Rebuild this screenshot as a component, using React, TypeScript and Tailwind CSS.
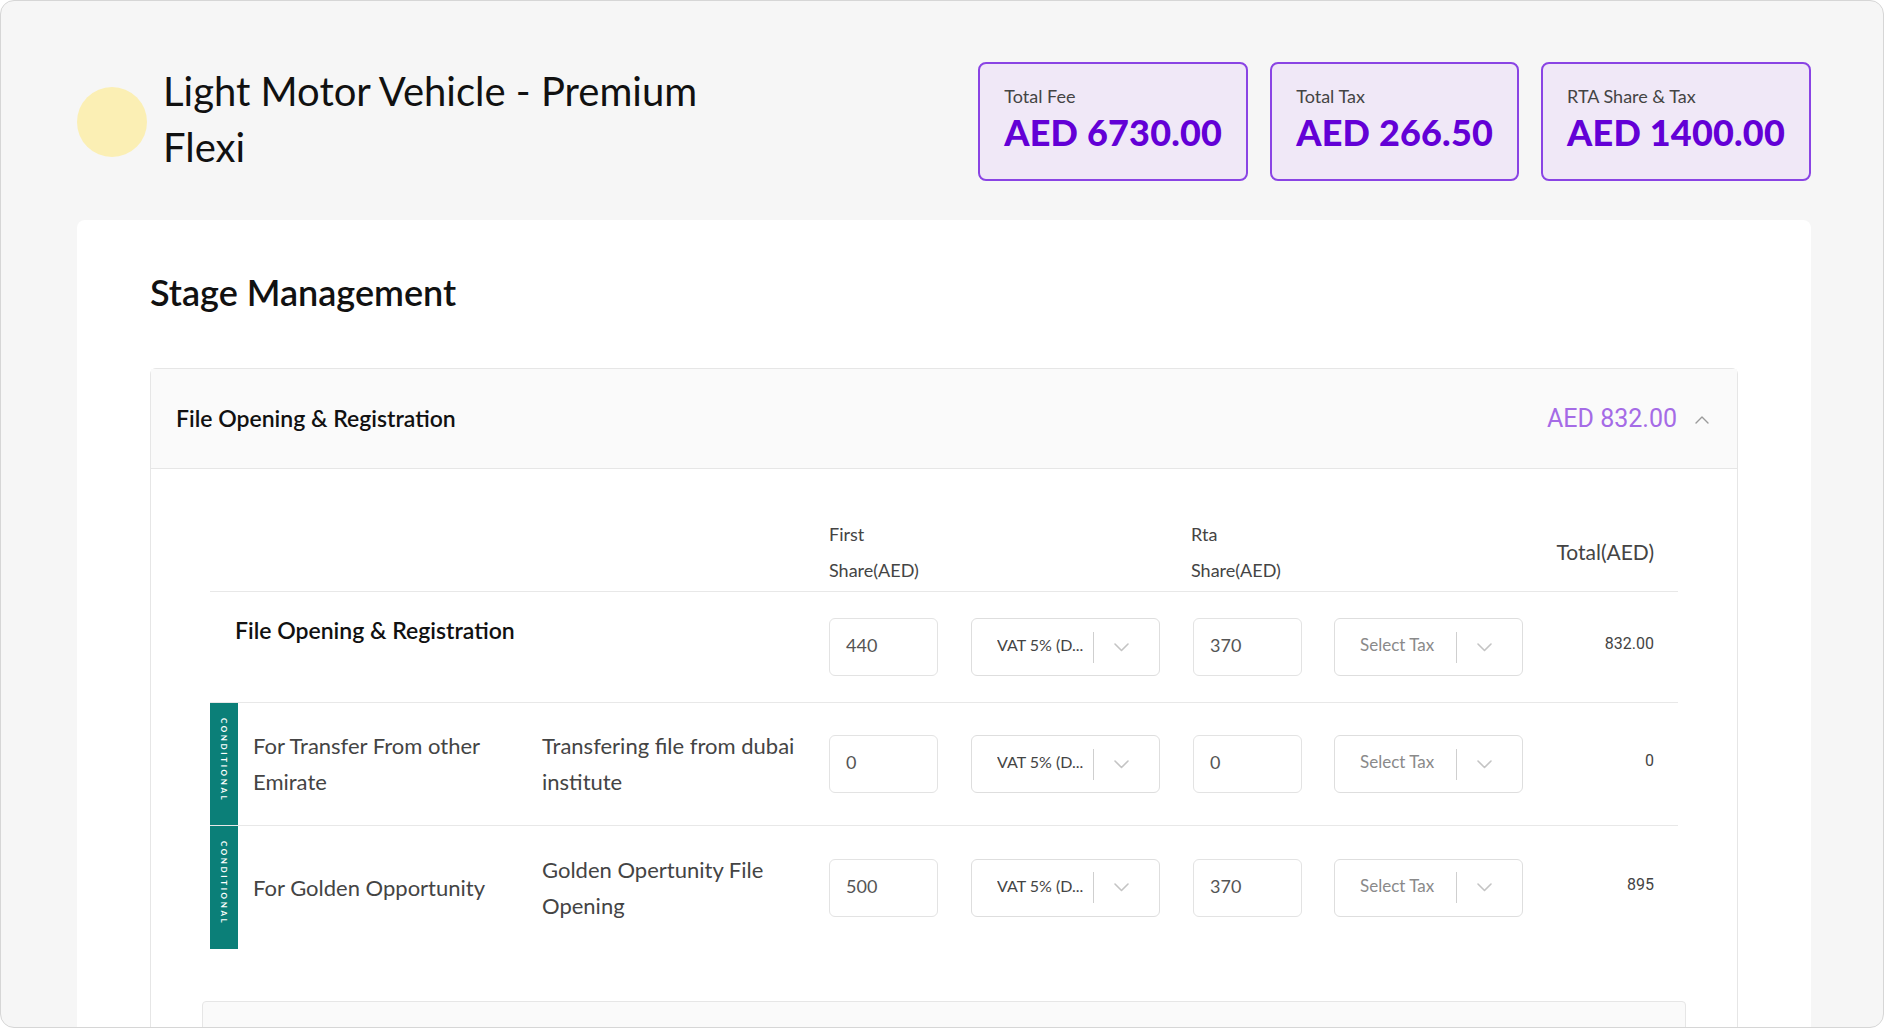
import type React from "react";

const font = { fontFamily: "Lato, 'Noto Sans', sans-serif" };
const roboto = { fontFamily: "Roboto, sans-serif" };

interface SummaryCardProps {
  label: string;
  value: string;
}

const SummaryCard: React.FC<SummaryCardProps> = ({ label, value }) => (
  <div className="flex h-[119px] flex-col justify-center gap-[4px] rounded-[8px] border-2 border-[#8a44e4] bg-[#f0e8f7] px-[24px] pb-[5px]">
    <p className="text-[18px] leading-[22px] text-[#444]">{label}</p>
    <p className="text-[36px] font-black leading-[42px] tracking-[0.2px] text-[#6300d6]">
      {value}
    </p>
  </div>
);

const ChevronDown = () => (
  <svg width="15" height="9" viewBox="0 0 15 9" fill="none">
    <polyline
      points="1,1 7.5,7.5 14,1"
      stroke="#c4c4c4"
      strokeWidth="1.6"
      strokeLinecap="round"
      strokeLinejoin="round"
    />
  </svg>
);

const TextInput = ({ value }: { value: string }) => (
  <div className="flex h-[58px] w-[109px] shrink-0 items-start rounded-[6px] border border-[#e3e3e3] bg-white px-[16px] pt-[13px] text-[18px] leading-[26px] text-[#555]">
    {value}
  </div>
);

const TaxSelect = ({ value, placeholder }: { value?: string; placeholder?: string }) => (
  <div className="flex h-[58px] w-[189px] shrink-0 items-center rounded-[6px] border border-[#dedede] bg-white pl-[25px]">
    <span
      className={`-mt-[4px] w-[96px] overflow-hidden whitespace-nowrap ${
        value ? "text-[16px] text-[#444]" : "text-[17px] text-[#8a8a8a]"
      }`}
    >
      {value ?? placeholder}
    </span>
    <span className="h-[31px] w-px bg-[#cfcfcf]" />
    <span className="ml-[20px] flex">
      <ChevronDown />
    </span>
  </div>
);

const ConditionalBadge = () => (
  <div className="flex w-[28px] shrink-0 items-start justify-center bg-[#0b7f78] pt-[15px]">
    <span
      className="text-[8px] font-bold tracking-[2.6px] text-white"
      style={{ writingMode: "vertical-rl" }}
    >
      CONDITIONAL
    </span>
  </div>
);

interface FeeRow {
  name: string;
  description: string;
  firstShare: string;
  rtaShare: string;
  total: string;
}

const conditionalRows: FeeRow[] = [
  {
    name: "For Transfer From other Emirate",
    description: "Transfering file from dubai institute",
    firstShare: "0",
    rtaShare: "0",
    total: "0",
  },
  {
    name: "For Golden Opportunity",
    description: "Golden Opertunity File Opening",
    firstShare: "500",
    rtaShare: "370",
    total: "895",
  },
];

const InputCells = ({ first, rta }: { first: string; rta: string }) => (
  <div className="flex items-center">
    <TextInput value={first} />
    <div className="ml-[33px]">
      <TaxSelect value="VAT 5% (D..." />
    </div>
    <div className="ml-[33px]">
      <TextInput value={rta} />
    </div>
    <div className="ml-[32px]">
      <TaxSelect placeholder="Select Tax" />
    </div>
  </div>
);

export default function App() {
  return (
    <div
      className="h-[1028px] w-full overflow-hidden rounded-[14px] border border-[#d6d6d6] bg-[#f6f6f6]"
      style={font}
    >
      <div className="pl-[76px] pr-[72px] pt-[61px]">
        {/* Header */}
        <div className="flex h-[119px] items-center justify-between">
          <div className="flex items-center gap-[16px]">
            <div className="h-[70px] w-[70px] shrink-0 rounded-full bg-[#fbefb4]" />
            <h1 className="-mt-[5px] w-[580px] text-[40px] leading-[56px] text-[#111]">
              Light Motor Vehicle - Premium Flexi
            </h1>
          </div>
          <div className="flex gap-[22px]">
            <SummaryCard label="Total Fee" value="AED 6730.00" />
            <SummaryCard label="Total Tax" value="AED 266.50" />
            <SummaryCard label="RTA Share & Tax" value="AED 1400.00" />
          </div>
        </div>

        {/* Stage panel */}
        <div className="mt-[39px] rounded-[8px] bg-white px-[73px] pt-[50px] pb-[40px]">
          <h2 className="text-[36px] font-semibold leading-[44px] text-[#111]">
            Stage Management
          </h2>

          <div className="mt-[54px] rounded-[6px] border border-[#e6e6e6]">
            <div className="flex h-[100px] items-center justify-between border-b border-[#e6e6e6] bg-[#fafafa] pl-[25px] pr-[28px]">
              <span className="text-[23px] font-semibold text-[#111]">
                File Opening &amp; Registration
              </span>
              <div className="flex items-center gap-[18px]">
                <span className="text-[25px] text-[#a56be6]" style={roboto}>
                  AED 832.00
                </span>
                <svg width="14" height="8" viewBox="0 0 14 8" fill="none" className="mt-[2px]">
                  <polyline
                    points="1,7 7,1 13,7"
                    stroke="#9a9a9a"
                    strokeWidth="1.4"
                    strokeLinecap="round"
                    strokeLinejoin="round"
                  />
                </svg>
              </div>
            </div>

            <div className="px-[59px] pt-[47px]">
              {/* Column headings */}
              <div className="flex items-center border-b border-[#e8e8e8] pb-[3px] text-[#444]">
                <div className="w-[619px] shrink-0" />
                <div className="w-[362px] shrink-0 text-[18px] leading-[36px]">
                  First
                  <br />
                  Share(AED)
                </div>
                <div className="w-[300px] shrink-0 text-[18px] leading-[36px]">
                  Rta
                  <br />
                  Share(AED)
                </div>
                <div className="flex-1 pr-[24px] text-right text-[21px]">Total(AED)</div>
              </div>

              {/* Stage row */}
              <div className="flex h-[111px] items-center border-b border-[#e8e8e8]">
                <div className="h-full w-[619px] shrink-0 pl-[25px] pt-[21px] text-[23px] font-semibold text-[#111]">
                  File Opening &amp; Registration
                </div>
                <InputCells first="440" rta="370" />
                <div
                  className="-mt-[6px] flex-1 pr-[24px] text-right text-[16px] text-[#444]"
                  style={roboto}
                >
                  832.00
                </div>
              </div>

              {/* Conditional rows */}
              {conditionalRows.map((row, i) => (
                <div
                  key={row.name}
                  className={`flex h-[123px] items-stretch ${
                    i === 0 ? "border-b border-[#e8e8e8]" : ""
                  }`}
                >
                  <ConditionalBadge />
                  <div className="flex w-[304px] shrink-0 items-center pl-[15px] pr-[20px] text-[22px] leading-[36px] text-[#444]">
                    {row.name}
                  </div>
                  <div className="flex w-[287px] shrink-0 items-center pr-[18px] text-[22px] leading-[36px] text-[#444]">
                    {row.description}
                  </div>
                  <div className="flex items-center">
                    <InputCells first={row.firstShare} rta={row.rtaShare} />
                  </div>
                  <div
                    className="-mt-[6px] flex flex-1 items-center justify-end pr-[24px] text-[16px] text-[#444]"
                    style={roboto}
                  >
                    {row.total}
                  </div>
                </div>
              ))}

              {/* Next section */}
              <div className="-mx-[8px] mt-[52px] h-[90px] rounded-t-[4px] border border-[#e6e6e6] bg-[#fafafa]" />
            </div>
          </div>
        </div>
      </div>
    </div>
  );
}
